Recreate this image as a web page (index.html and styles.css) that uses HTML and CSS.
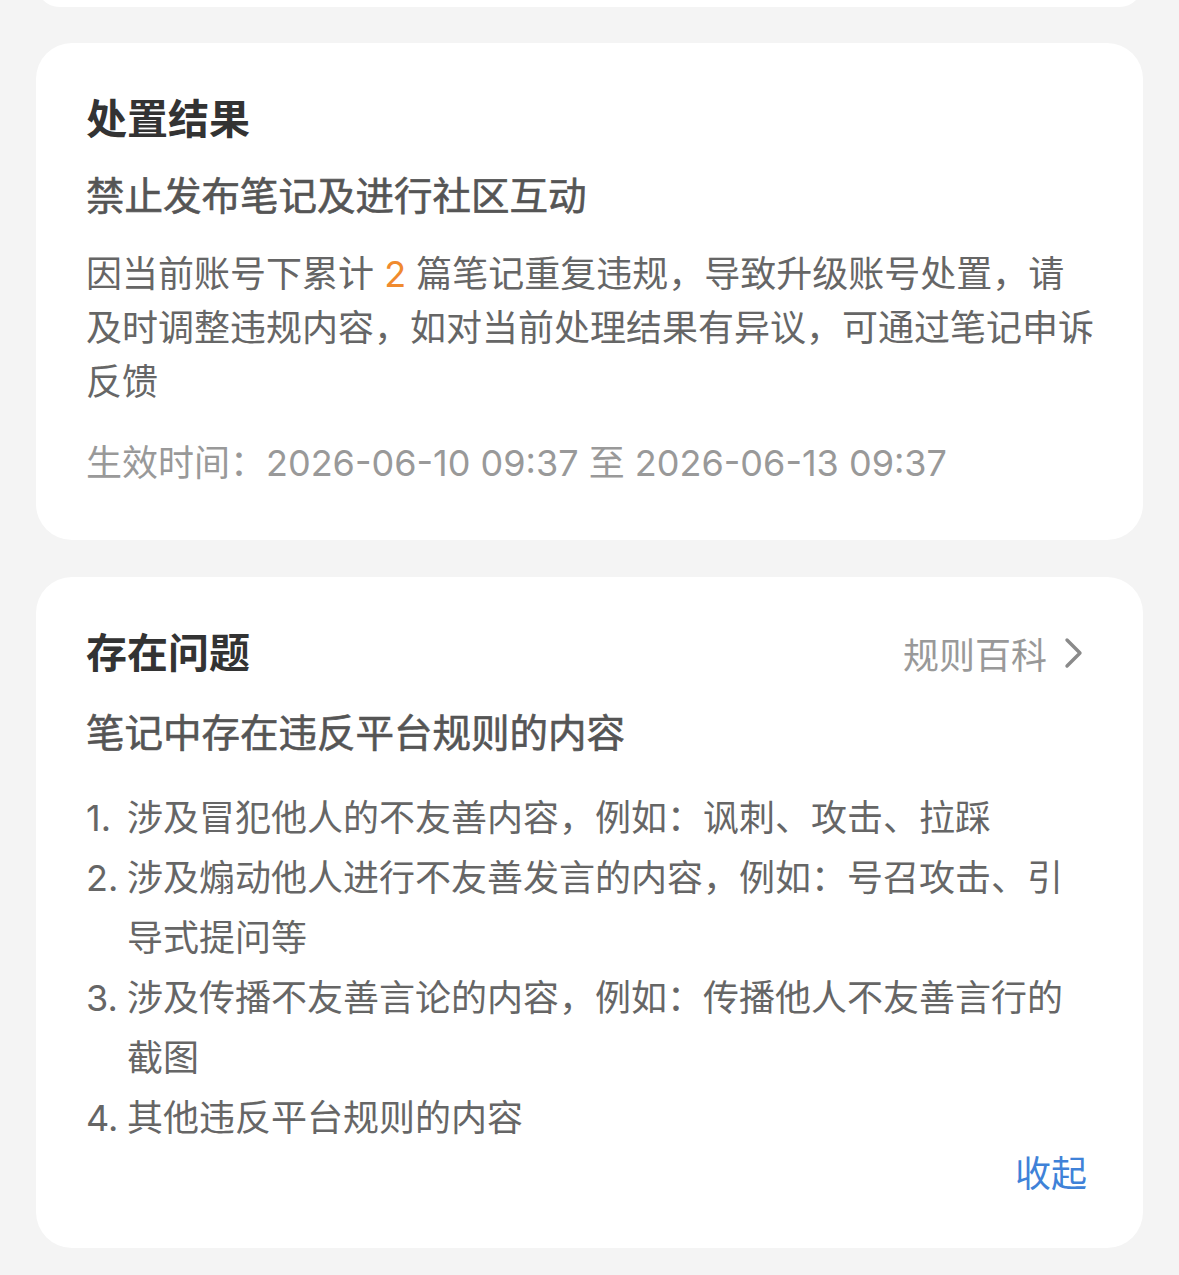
FILE: index.html
```html
<!DOCTYPE html>
<html lang="zh-CN">
<head>
<meta charset="UTF-8">
<meta name="viewport" content="width=device-width, initial-scale=1.0">
<title>处置结果</title>
<link rel="stylesheet" href="styles.css">
</head>
<body>
<div class="page">
  <div class="card card-prev"></div>

  <div class="card card-result">
    <h2 class="card-title">处置结果</h2>
    <div class="card-sub">禁止发布笔记及进行社区互动</div>
    <p class="desc">因当前账号下累计 <span class="num">2</span> 篇笔记重复违规，导致升级账号处置，请及时调整违规内容，如对当前处理结果有异议，可通过笔记申诉反馈</p>
    <div class="time">生效时间：2026-06-10 09:37 至 2026-06-13 09:37</div>
  </div>

  <div class="card card-issue">
    <div class="card-head">
      <h2 class="card-title">存在问题</h2>
      <a class="rule-link" href="#">规则百科
        <svg width="22" height="32" viewBox="0 0 22 32"><path d="M4 3 L17 16 L4 29" fill="none" stroke="#8a8a8a" stroke-width="3.4" stroke-linecap="round" stroke-linejoin="round"/></svg>
      </a>
    </div>
    <div class="card-sub">笔记中存在违反平台规则的内容</div>
    <ol class="issues">
      <li><span class="idx">1.</span><span>涉及冒犯他人的不友善内容，例如：讽刺、攻击、拉踩</span></li>
      <li><span class="idx">2.</span><span>涉及煽动他人进行不友善发言的内容，例如：号召攻击、引导式提问等</span></li>
      <li><span class="idx">3.</span><span>涉及传播不友善言论的内容，例如：传播他人不友善言行的截图</span></li>
      <li><span class="idx">4.</span><span>其他违反平台规则的内容</span></li>
    </ol>
    <div class="fold"><a href="#">收起</a></div>
  </div>
</div>
</body>
</html>
```

FILE: styles.css
```css
body {
  margin: 0;
  padding: 0;
  background: #f4f4f4;
  font-family: Inter, "Noto Sans CJK SC", sans-serif;
  color: #666;
}

.page {
  padding: 0 36px;
  overflow: hidden;
}

.card {
  background: #fff;
  border-radius: 36px;
  padding: 47px 48px 49px 50px;
  margin-top: 37px;
}

.card-prev {
  height: 47px;
  padding: 0;
  margin-top: -40px;
}

.card-result {
  margin-top: 36px;
  padding-bottom: 52px;
}

.card-title {
  margin: 0;
  font-size: 41px;
  line-height: 58px;
  font-weight: 700;
  color: #333;
}

.card-sub {
  margin-top: 23px;
  font-size: 38.5px;
  line-height: 50px;
  font-weight: 400;
  color: #555;
  -webkit-text-stroke: 0.6px #555;
}

.card-issue .card-sub {
  margin-top: 26px;
}

.desc {
  margin: 26px 0 0;
  font-size: 36px;
  line-height: 54px;
  color: #666;
}

.num {
  color: #f08a2e;
}

.time {
  margin-top: 29px;
  font-size: 36px;
  line-height: 50px;
  color: #999;
}

.card-head {
  display: flex;
  justify-content: space-between;
  align-items: center;
}

.rule-link {
  display: flex;
  align-items: center;
  gap: 16px;
  font-size: 36px;
  color: #999;
  text-decoration: none;
  margin-right: 10px;
}

.issues {
  list-style: none;
  margin: 30px 0 0;
  padding: 0;
  font-size: 36px;
  line-height: 60px;
  color: #666;
}

.issues li {
  display: flex;
  padding-right: 8px;
}

.idx {
  flex: none;
  width: 41px;
}

.fold {
  margin-top: 1px;
  margin-right: 8px;
  text-align: right;
  font-size: 36px;
  line-height: 50px;
}

.fold a {
  color: #3f82d8;
  text-decoration: none;
}
```
